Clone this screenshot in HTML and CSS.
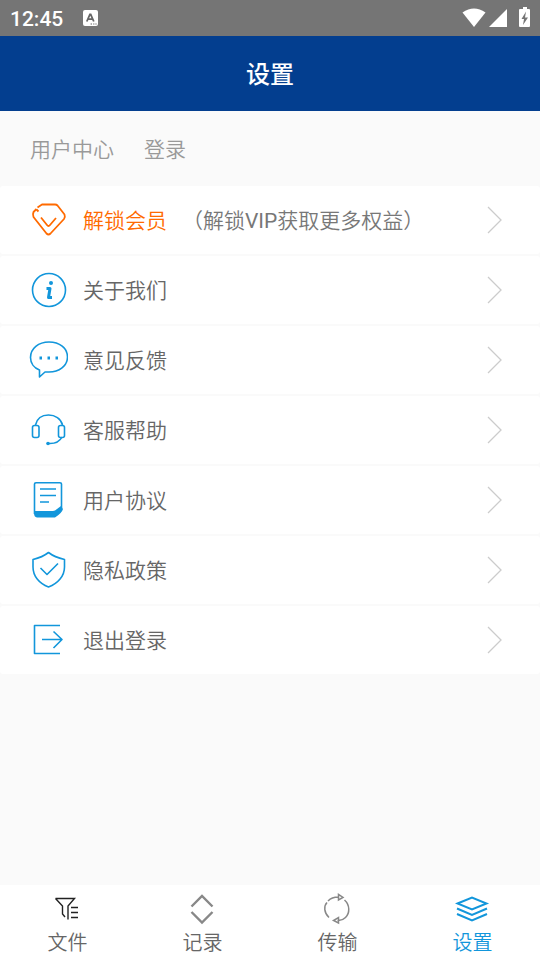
FILE: index.html
```html
<!DOCTYPE html>
<html lang="zh-CN">
<head>
<meta charset="utf-8">
<meta name="viewport" content="width=device-width, initial-scale=1">
<title>设置</title>
<link rel="stylesheet" href="styles.css">
</head>
<body>
<svg class="defs" aria-hidden="true">
  <symbol id="chevron" viewBox="0 0 16 28"><path d="M1 1 14 14 1 27"/></symbol>
</svg>
<div class="status">
  <span class="clock">12:45</span>
  <svg class="ime" width="16" height="16" viewBox="0 0 16 16"><rect x="0" y="0" width="15" height="16" rx="2" fill="#fff"/><path d="M3.800 11.500 6.900 4.500h.8L10.800 11.500M5 9.200h4.800" fill="none" stroke="#666" stroke-width="1.800"/><path d="M7.600 14h1.400M10.200 14h1.200M12.400 14h1.200" stroke="#666" stroke-width="1.200"/></svg>
  <svg class="signals" width="70" height="22" viewBox="0 0 70 22"><g fill="#fff"><path d="M2.500 5.500Q14-2.500 25.500 5.500L14 20Z"/><path d="M47 2v18H29Z"/><path d="M61 2h2V0h4v2h2q1 0 1 1v16q0 1-1 1h-9q-1 0-1-1V3q0-1 1-1Z"/></g><path fill="#757575" d="M66 4.500 61.500 12h2.500l-1 6 5-7.500h-3Z"/></svg>
</div>
<header class="bar"><h1>设置</h1></header>
<main>
  <div class="account"><span>用户中心</span><a href="#login">登录</a></div>
  <nav class="menu" aria-label="设置">
    <a class="row vip" href="#vip">
      <svg class="icon" viewBox="0 0 40 40"><path d="M8.500 9 5.500 12Q4.500 14 5.500 17L18.500 33.500Q20.500 35.500 22.500 33.500L36 19Q37.500 17 36.500 14.500L29.500 5.500Q28.500 4.500 27 4.500H14L9.500 7.500M8.500 9.500 10.500 11.500M13 17.500 19 25Q20.500 27 22 25L28 18"/></svg>
      <span>解锁会员</span><span class="note">（解锁<b>VIP</b>获取更多权益）</span>
      <svg class="chevron"><use href="#chevron"/></svg>
    </a>
    <a class="row" href="#about">
      <svg class="icon" viewBox="0 0 40 40"><circle cx="21" cy="20" r="16.500"/><circle class="solid" cx="23" cy="13" r="2"/><path class="heavy" d="M18.500 18.500H22L20.500 27.500H24"/></svg>
      <span>关于我们</span><svg class="chevron"><use href="#chevron"/></svg>
    </a>
    <a class="row" href="#feedback">
      <svg class="icon" viewBox="0 0 40 40"><path d="M11.500 30C6 28 2.500 23 2.500 17.500 2.500 8.500 10.500 2 21 2S39.500 8 39.500 17 31 32 21 32H17L11.500 37Z"/><path class="heavy" d="M11.500 18h2.500M19.500 18H22M27.500 18H30"/></svg>
      <span>意见反馈</span><svg class="chevron"><use href="#chevron"/></svg>
    </a>
    <a class="row" href="#help">
      <svg class="icon" viewBox="0 0 40 40"><path d="M7.500 15C9 8.500 14 5 20.500 5S33 8.500 34.500 15M34 27C32 31 27 34 20 33.500"/><rect x="4.500" y="15.500" width="6.500" height="12" rx="2"/><rect x="30.500" y="15.500" width="6" height="12" rx="2"/><circle class="solid" cx="20" cy="33.500" r="1.800"/></svg>
      <span>客服帮助</span><svg class="chevron"><use href="#chevron"/></svg>
    </a>
    <a class="row" href="#terms">
      <svg class="icon" viewBox="0 0 40 40"><path d="M6.500 34V4Q6.500 2.800 8 2.800H32Q33.500 2.800 33.500 4V28M12 9H28M12 15.500H28M12 22H21"/><path class="solid" d="M7 31H25Q27 31 29 29L33 26 35 29Q34 33 27 37.500H9Q6 37 6 33Z"/></svg>
      <span>用户协议</span><svg class="chevron"><use href="#chevron"/></svg>
    </a>
    <a class="row" href="#privacy">
      <svg class="icon" viewBox="0 0 40 40"><path d="M20.500 2.500C16 6 11 8 5 9.500V17C5 26 11 33.500 20.500 37 30 33.500 36.500 26 36.500 17V9.500C30 8 25 6 20.500 2.500ZM12.500 18 19 24.500 30 13.500"/></svg>
      <span>隐私政策</span><svg class="chevron"><use href="#chevron"/></svg>
    </a>
    <a class="row" href="#logout">
      <svg class="icon" viewBox="0 0 40 40"><path d="M32 5.500H6.500V33.500H32M14 19.500H34M25.500 11.500 34 19.500 25.500 28"/></svg>
      <span>退出登录</span><svg class="chevron"><use href="#chevron"/></svg>
    </a>
  </nav>
</main>
<nav class="tabs" aria-label="主导航">
  <a href="#files"><svg viewBox="0 0 36 32"><path stroke="#222" stroke-width="1.400" d="M5.500 5.500H24.500L18 13V26.500M5.500 5.500 12.500 13V21L15 24M21 14.500H28M21 19.500H28M21 24.500H28"/></svg>文件</a>
  <a href="#records"><svg viewBox="0 0 36 32"><path stroke="#888" stroke-width="2.400" d="M6.500 13.500 17 3 27.500 13.500M6.500 19 17 29.500 27.500 19"/></svg>记录</a>
  <a href="#transfer"><svg viewBox="0 0 36 32"><path stroke="#888" stroke-width="1.500" d="M8 8Q12 4 18 4M24.500 7C30 12 30 20 25.500 24.500Q22 28 17.500 27.500M9 24.500C4 20 3.500 13 7 9.500M18.500 1.500V7L23 4.500ZM18.500 24.500V30L13.500 27.500Z"/></svg>传输</a>
  <a class="active" href="#settings" aria-current="page"><svg viewBox="0 0 36 32"><path stroke="#1296db" stroke-width="2" d="M2.500 10.500 17 4.500 31.500 10.500 17 16.500ZM2 15.500 17 22 32 15.500M2 21 17 27.500 32 21"/></svg>设置</a>
</nav>
</body>
</html>
```
FILE: styles.css
```css
* { box-sizing: border-box; }
body {
  margin: 0;
  min-height: 100vh;
  display: flex;
  flex-direction: column;
  background: #fafafa;
  color: #666;
  font-family: Roboto, "Noto Sans CJK SC", sans-serif;
  font-size: 21px;
  font-weight: 350;
  line-height: 30px;
}
a { color: inherit; text-decoration: none; }
svg { display: block; flex: none; fill: none; }
.defs { position: absolute; width: 0; height: 0; }
.status {
  display: flex;
  align-items: center;
  height: 36px;
  padding: 0 10px;
  background: #757575;
  color: #fff;
}
.clock { padding-top: 1px; font-weight: 500; }
.ime { margin-left: 20px; }
.signals { margin-left: auto; }
.bar {
  display: flex;
  align-items: center;
  justify-content: center;
  height: 75px;
  padding-top: 2px;
  background: #033e8f;
  color: #fff;
}
h1 { margin: 0; font-size: 24px; font-weight: 500; }
main { flex: 1; }
.account {
  display: flex;
  align-items: center;
  gap: 30px;
  height: 75px;
  padding: 2px 30px 0;
  color: #999;
}
.menu { display: grid; gap: 2px; }
.row {
  display: flex;
  align-items: center;
  gap: 15px;
  height: 68px;
  padding: 0 37px 0 28px;
  border-radius: 3px;
  background: #fff;
}
.row > span { padding-top: 2px; }
.icon {
  width: 40px;
  height: 40px;
  stroke: #1296db;
  stroke-width: 1.600;
  stroke-linejoin: round;
}
.icon .solid { fill: #1296db; stroke: none; }
.icon .heavy { stroke-width: 3; }
.vip { color: #ff6a00; }
.vip .icon { stroke: #ff6a00; stroke-width: 1.800; }
.note { color: #777; }
.note b { font-weight: 400; }
.chevron {
  width: 16px;
  height: 28px;
  margin-left: auto;
  stroke: #ccc;
  stroke-width: 1.300;
}
.tabs {
  display: grid;
  grid-template-columns: repeat(4, 1fr);
  height: 75px;
  background: #fff;
  font-size: 20px;
}
.tabs a {
  display: flex;
  flex-direction: column;
  align-items: center;
  padding-top: 8px;
  gap: 3px;
}
.tabs svg { width: 36px; height: 32px; }
.tabs .active { color: #1296db; }
```
